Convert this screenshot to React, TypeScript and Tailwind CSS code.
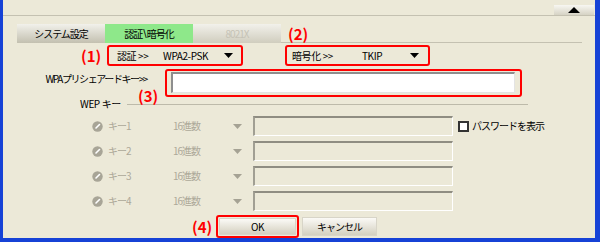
import React from 'react';

const Tri = ({ color = '#000', w = 9, h = 5, up }: { color?: string; w?: number; h?: number; up?: boolean }) => (
  <svg width={w} height={h} viewBox={`0 0 ${w} ${h}`} className="shrink-0">
    <polygon points={up ? `0,${h} ${w},${h} ${w / 2},0` : `0,0 ${w},0 ${w / 2},${h}`} fill={color} />
  </svg>
);

const Radio = () => (
  <svg width="11" height="11" viewBox="0 0 11 11" className="shrink-0">
    <circle cx="5.5" cy="5.5" r="5.2" fill="#A8A597" />
    <line x1="4" y1="7" x2="7.5" y2="3.5" stroke="#fff" strokeWidth="1.6" strokeLinecap="round" />
  </svg>
);

const KeyRow = ({ n, first }: { n: number; first?: boolean }) => (
  <div className="flex items-center h-[20px] pl-[89px]">
    <Radio />
    <span className="ml-[5px] w-[65px] text-[#ACA899] tracking-[-1px]">キー{n}</span>
    <span className="w-[60px] text-[#ACA899] tracking-[-1px]">16進数</span>
    <Tri color="#A5A294" />
    <div className="ml-[11px] w-[200px] h-[20px] border-t-2 border-l-2 border-t-[#8F8D82] border-l-[#A19F93] border-b border-r border-b-white border-r-white" />
    {first && (
      <div className="flex items-center ml-[5px] whitespace-nowrap">
        <div className="w-[11px] h-[11px] border-2 border-[#333] bg-white" />
        <span className="ml-[3px] tracking-[-1px]">パスワードを表示</span>
      </div>
    )}
  </div>
);

const App = () => {
  const tab = 'w-[88px] h-[19px] flex items-center justify-center tracking-[-1px]';
  return (
    <div className="relative w-[600px] h-[242px] bg-[#ECE9D8] border-l-[3px] border-r-[5px] border-b-[4px] border-[#1642D6] overflow-hidden text-[10px] leading-none tracking-[-0.4px] text-black whitespace-nowrap font-['Noto_Sans_CJK_JP','Liberation_Sans',sans-serif]">
      {/* top bar */}
      <div className="h-[16px] border-b border-[#C4C1B1] flex justify-end items-end">
        <div className="w-[40px] h-[10px] mr-[1px] bg-linear-to-b from-[#F8F7F2] to-[#D6D3C4] flex items-center justify-center">
          <Tri w={12} h={6} up />
        </div>
      </div>

      {/* tabs */}
      <div className="mt-[8px] flex h-[19px] pl-[14px] pr-[13px]">
        <div className={`${tab} bg-linear-to-b from-[#F2F1EB] to-[#C3C0B0]`}>システム設定</div>
        <div className={`${tab} bg-[#8EE88A]`}>
          認証<span className="font-['DejaVu_Sans',sans-serif] mx-[1px]">{'\\'}</span>暗号化
        </div>
        <div className={`${tab} bg-linear-to-b from-[#F2F1EB] to-[#D0CDBE] text-[#C6C3B6]`}>8021X</div>
        <div className="flex-1 border-b border-[#C4C1B1]" />
      </div>

      {/* auth / encryption */}
      <div className="mt-[2px] flex items-center h-[21px] pl-[78px]">
        <span className="w-[26px] text-[15px] tracking-normal font-bold text-[#FF0000]">(1)</span>
        <div className="w-[136px] h-[21px] border-2 border-[#FF0000] rounded-[3px] flex items-center pl-[8px]">
          <span className="w-[46px]">認証 &gt;&gt;</span>
          <span className="w-[61px]">WPA2-PSK</span>
          <Tri />
        </div>
        <div className="relative ml-[42px] w-[145px] h-[21px] border-2 border-[#FF0000] rounded-[3px] flex items-center pl-[5px]">
          <span className="absolute -top-[21px] left-[1px] text-[15px] tracking-normal font-bold text-[#FF0000]">(2)</span>
          <span className="w-[70px]">暗号化 &gt;&gt;</span>
          <span className="w-[48px]">TKIP</span>
          <Tri />
        </div>
      </div>

      {/* pre-shared key */}
      <div className="mt-[3px] flex items-start h-[28px]">
        <span className="mt-[5px] w-[144px] text-right tracking-[-1.4px]">WPAプリシェアードキー&gt;&gt;</span>
        <div className="relative ml-[18px] w-[357px] h-[28px] border-2 border-[#FF0000] rounded-[3px] pl-[4px] pt-[1px]">
          <span className="absolute -left-[29px] top-[17px] text-[15px] tracking-normal font-bold text-[#FF0000]">(3)</span>
          <div className="w-[344px] h-[21px] bg-white border-t-2 border-l-2 border-[#8E8E8E] border-b border-r border-b-[#E4E4E4] border-r-[#E4E4E4]" />
        </div>
      </div>

      {/* WEP group */}
      <div className="flex items-center h-[14px] pl-[77px]">
        <span className="w-[47px] shrink-0">WEP キー</span>
        <div className="w-[401px] border-t border-[#BDBAAA]" />
      </div>
      <div className="mt-[5px] flex flex-col gap-[5px]">
        <KeyRow n={1} first />
        <KeyRow n={2} />
        <KeyRow n={3} />
        <KeyRow n={4} />
      </div>

      {/* buttons */}
      <div className="mt-[4px] flex items-center pl-[189px]">
        <span className="w-[24px] text-[15px] tracking-normal font-bold text-[#FF0000]">(4)</span>
        <div className="w-[83px] h-[23px] border-2 border-[#FF0000] rounded-[3px] p-[1px]">
          <button className="w-full h-full bg-linear-to-b from-[#FBFAF6] to-[#D4D0C0] border border-[#D8D5C8]">OK</button>
        </div>
        <button className="ml-[3px] w-[75px] h-[19px] bg-linear-to-b from-[#FBFAF6] to-[#D4D0C0] border border-[#D8D5C8] tracking-[-1px]">キャンセル</button>
      </div>
    </div>
  );
};

export default App;
